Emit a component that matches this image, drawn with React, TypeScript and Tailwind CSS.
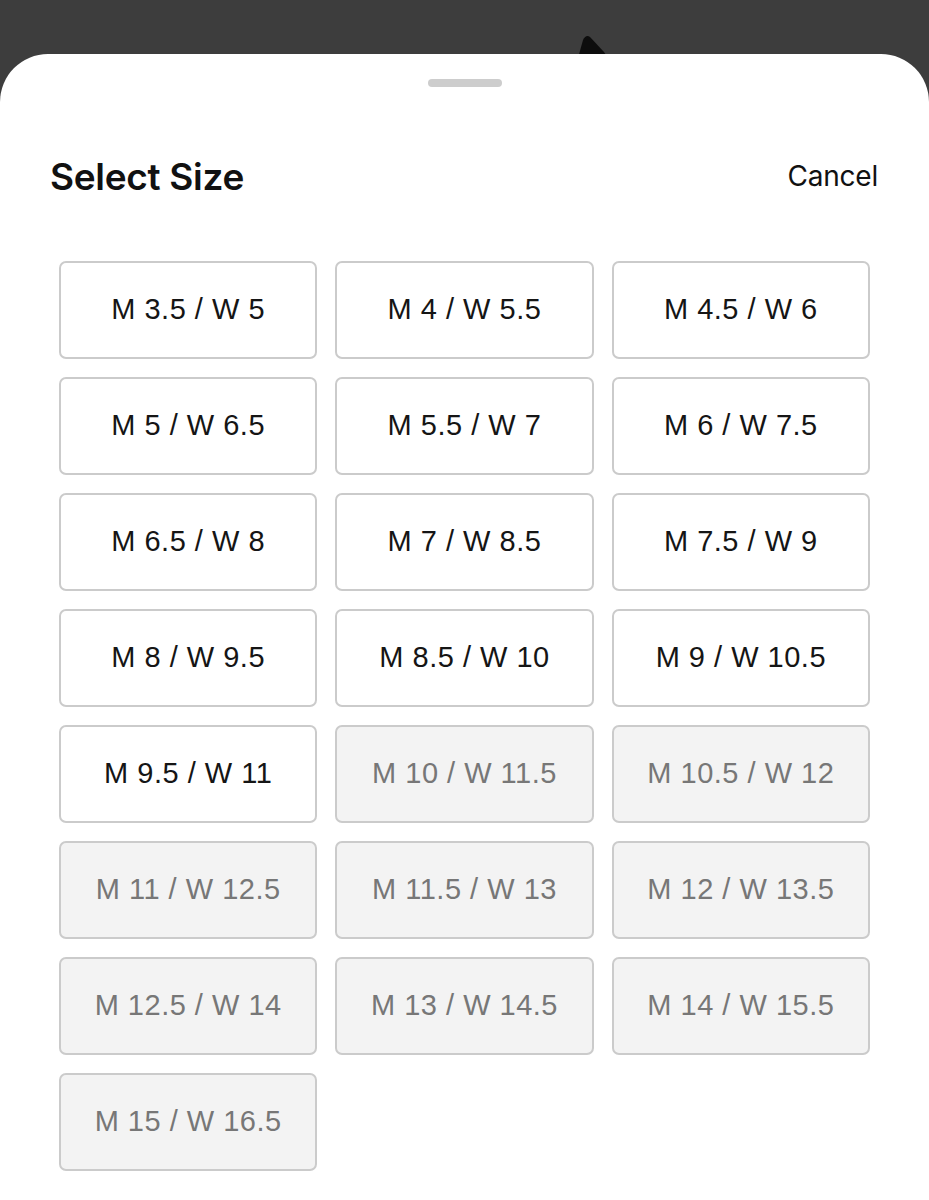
const sizes: { label: string; available: boolean }[] = [
  { label: "M 3.5 / W 5", available: true },
  { label: "M 4 / W 5.5", available: true },
  { label: "M 4.5 / W 6", available: true },
  { label: "M 5 / W 6.5", available: true },
  { label: "M 5.5 / W 7", available: true },
  { label: "M 6 / W 7.5", available: true },
  { label: "M 6.5 / W 8", available: true },
  { label: "M 7 / W 8.5", available: true },
  { label: "M 7.5 / W 9", available: true },
  { label: "M 8 / W 9.5", available: true },
  { label: "M 8.5 / W 10", available: true },
  { label: "M 9 / W 10.5", available: true },
  { label: "M 9.5 / W 11", available: true },
  { label: "M 10 / W 11.5", available: false },
  { label: "M 10.5 / W 12", available: false },
  { label: "M 11 / W 12.5", available: false },
  { label: "M 11.5 / W 13", available: false },
  { label: "M 12 / W 13.5", available: false },
  { label: "M 12.5 / W 14", available: false },
  { label: "M 13 / W 14.5", available: false },
  { label: "M 14 / W 15.5", available: false },
  { label: "M 15 / W 16.5", available: false },
];

export default function App() {
  return (
    <div
      className="relative h-[1200px] overflow-hidden bg-[#3d3d3d]"
      style={{ fontFamily: "Inter, 'Liberation Sans', sans-serif" }}
    >
      {/* tip of the product photo peeking above the sheet */}
      <svg
        className="absolute left-[574px] top-[34px]"
        width="40"
        height="24"
        viewBox="0 0 40 24"
      >
        <path d="M4 24 L9 6 Q12 0 16 3 L30 18 L34 24 Z" fill="#0d0d0d" />
      </svg>

      <div className="relative mt-[54px] h-[1146px] rounded-t-[48px] bg-white">
        <div className="flex justify-center pt-[25px]">
          <div className="h-[8px] w-[74px] rounded-full bg-[#cdcdcd]" />
        </div>

        <div className="flex items-center justify-between pl-[50px] pr-[51px] pt-[67px]">
          <h1 className="text-[37px] font-semibold leading-[46px] tracking-[-0.3px] text-[#111]">
            Select Size
          </h1>
          <button className="-mt-[3px] text-[28px] leading-[40px] tracking-[-0.2px] text-[#111]">
            Cancel
          </button>
        </div>

        <div className="grid grid-cols-3 gap-x-[18px] gap-y-[18px] px-[59px] pt-[61px]">
          {sizes.map((s) => (
            <button
              key={s.label}
              disabled={!s.available}
              className={`flex h-[98px] items-center justify-center rounded-[7px] border-2 border-[#cbcbcb] font-['Liberation_Sans',sans-serif] text-[29px] tracking-[0.5px] ${
                s.available
                  ? "bg-white text-[#151515]"
                  : "bg-[#f3f3f3] text-[#777]"
              }`}
            >
              {s.label}
            </button>
          ))}
        </div>
      </div>
    </div>
  );
}
